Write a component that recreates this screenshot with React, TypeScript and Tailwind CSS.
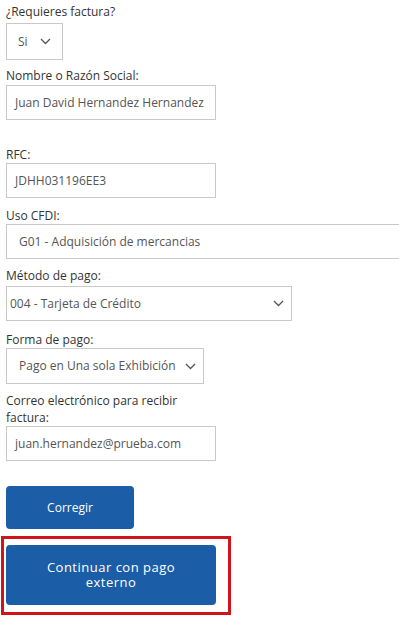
const Chevron = () => (
  <svg width="11" height="7" viewBox="0 0 11 7" fill="none" className="shrink-0">
    <path d="M1 1l4.5 4.5L10 1" stroke="#555" strokeWidth="1.3" />
  </svg>
);

interface SelectBoxProps {
  value: string;
  className: string;
  showChevron?: boolean;
}

const SelectBox = ({ value, className, showChevron = true }: SelectBoxProps) => (
  <div className={`flex items-center border border-[#c9c9c9] bg-white text-[12px] text-[#555] ${className}`}>
    <span className="flex-1 whitespace-nowrap">{value}</span>
    {showChevron ? <Chevron /> : null}
  </div>
);

const TextBox = ({ value, className }: { value: string; className: string }) => (
  <div className={`flex items-center border border-[#c9c9c9] bg-white pl-[8px] text-[12px] text-[#555] whitespace-nowrap ${className}`}>
    {value}
  </div>
);

const Label = ({ children, className }: { children: React.ReactNode; className: string }) => (
  <p className={`text-[12px] leading-[17px] text-[#333] ${className}`}>{children}</p>
);

export default function App() {
  return (
    <div
      className="min-h-[621px] w-[399px] overflow-hidden bg-white pl-[6px]"
      style={{ fontFamily: '"Open Sans", "Noto Sans", sans-serif' }}
    >
      <Label className="pt-[3px]">¿Requieres factura?</Label>
      <SelectBox value="Si" className="mt-[3px] h-[37px] w-[57px] pl-[11px] pr-[11px]" />

      <Label className="mt-[7px]">Nombre o Razón Social:</Label>
      <TextBox value="Juan David Hernandez Hernandez" className="mt-[1px] h-[35px] w-[210px]" />

      <Label className="mt-[26px]">RFC:</Label>
      <TextBox value="JDHH031196EE3" className="h-[35px] w-[210px]" />

      <Label className="mt-[9px]">Uso CFDI:</Label>
      <SelectBox
        value="G01 - Adquisición de mercancias"
        className="h-[35px] w-[440px] pl-[12px]"
        showChevron={false}
      />

      <Label className="mt-[8px]">Método de pago:</Label>
      <SelectBox value="004 - Tarjeta de Crédito" className="mt-[2px] h-[35px] w-[286px] pl-[3px] pr-[7px]" />

      <Label className="mt-[10px]">Forma de pago:</Label>
      <SelectBox value="Pago en Una sola Exhibición" className="h-[36px] w-[198px] pl-[12px] pr-[7px]" />

      <Label className="mt-[8px]">
        Correo electrónico para recibir
        <br />
        factura:
      </Label>
      <TextBox value="juan.hernandez@prueba.com" className="h-[35px] w-[210px]" />

      <button className="mt-[25px] flex h-[43px] w-[128px] items-center justify-center rounded-[4px] bg-[#1b5ea7] text-[12px] font-normal text-white">
        Corregir
      </button>

      <div className="ml-[-5px] mt-[7px] w-[230px] border-[3px] border-[#d0141c] pb-[7px] pl-[2px] pr-[11px] pt-[6px]">
        <button className="h-[60px] w-[210px] rounded-[4px] bg-[#1b5ea7] text-center text-[13px] leading-[15px] tracking-[0.5px] text-white">
          Continuar con pago
          <br />
          externo
        </button>
      </div>
    </div>
  );
}
